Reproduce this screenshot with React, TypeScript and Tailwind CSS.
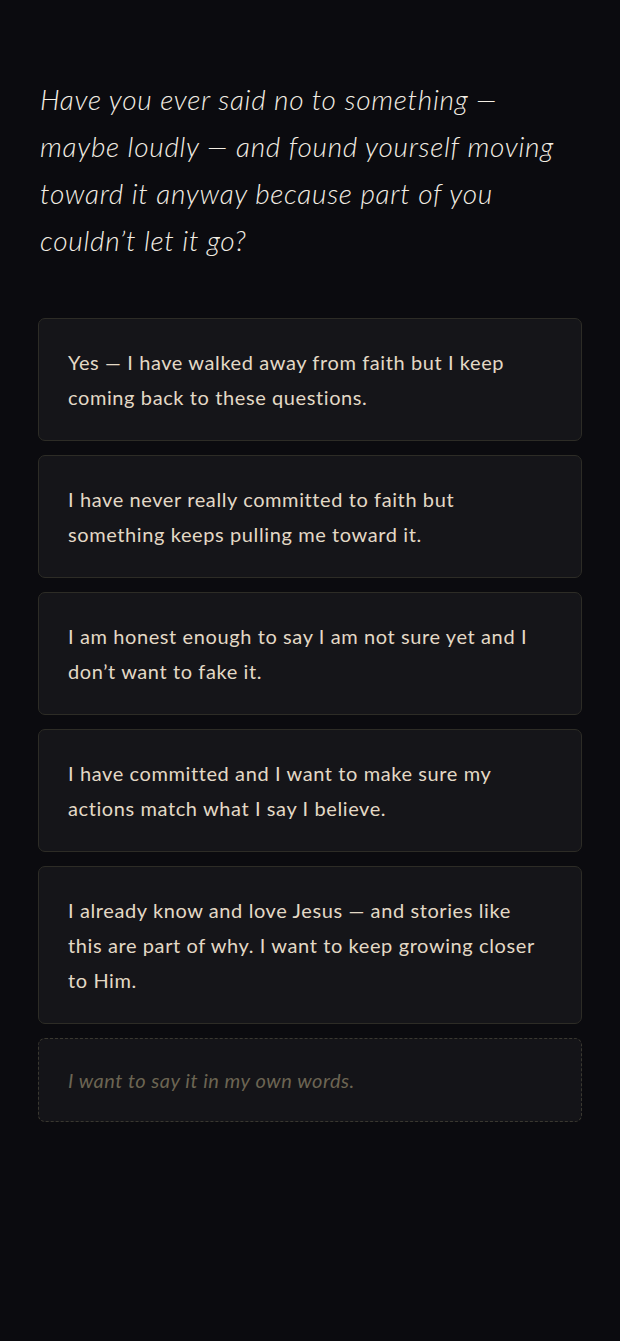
import React from "react";

const options = [
  "Yes — I have walked away from faith but I keep coming back to these questions.",
  "I have never really committed to faith but something keeps pulling me toward it.",
  "I am honest enough to say I am not sure yet and I don’t want to fake it.",
  "I have committed and I want to make sure my actions match what I say I believe.",
  "I already know and love Jesus — and stories like this are part of why. I want to keep growing closer to Him.",
];

export default function App() {
  return (
    <div
      className="min-h-[1341px] w-full bg-[#0b0b0f] px-[38px] pt-[76px]"
      style={{ fontFamily: "Lato, 'Open Sans', sans-serif" }}
    >
      <h1 className="whitespace-nowrap pl-[2px] text-[28px] font-light italic leading-[47px] tracking-[0.7px] text-[#f3eee4]">
        Have you ever said no to something —<br />
        maybe loudly — and found yourself moving<br />
        toward it anyway because part of you<br />
        couldn’t let it go?
      </h1>
      <div className="mt-[54px] flex flex-col gap-[14px]">
        {options.map((o) => (
          <div
            key={o}
            className="rounded-[7px] border border-[#2d2c26] bg-[#151519] pl-[29px] pr-[32px] py-[25.5px] text-[20px] leading-[35px] tracking-[0.6px] text-[#e3d9c6]"
          >
            {o}
          </div>
        ))}
        <div className="rounded-[7px] border border-dashed border-[#3a3830] bg-[#141418] px-[29px] py-[25.5px] text-[20px] italic leading-[31px] tracking-[0.5px] text-[#6c6553]">
          I want to say it in my own words.
        </div>
      </div>
    </div>
  );
}
